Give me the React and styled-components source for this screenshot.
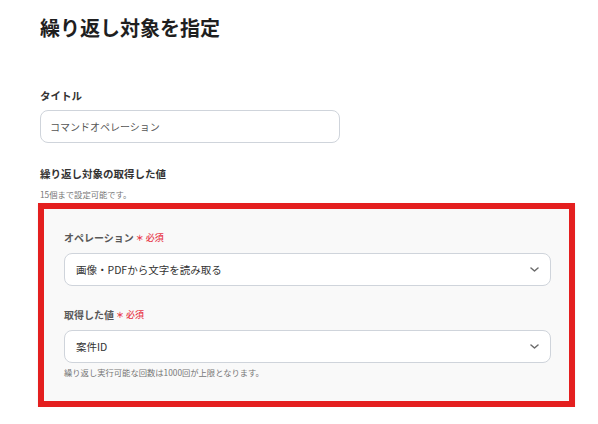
import React from "react";
import styled, { createGlobalStyle } from "styled-components";

const GlobalStyle = createGlobalStyle`
  body {
    margin: 0;
    background: #ffffff;
    font-family: "Noto Sans CJK JP", "Noto Sans", sans-serif;
    color: #222;
  }
`;

export default function App() {
  return (
    <>
      <GlobalStyle />
      <Page>
        <Title>繰り返し対象を指定</Title>

        <Label $top={46}>タイトル</Label>
        <TextInput>コマンドオペレーション</TextInput>

        <Label $top={23}>繰り返し対象の取得した値</Label>
        <Hint $top={6}>15個まで設定可能です。</Hint>

        <Highlight>
          <Panel>
            <FieldLabel>
              オペレーション
              <Star>＊</Star>
              <Required>必須</Required>
            </FieldLabel>
            <Select>
              <span>画像・PDFから文字を読み取る</span>
              <Chevron />
            </Select>

            <FieldLabel $top={21}>
              取得した値
              <Star>＊</Star>
              <Required>必須</Required>
            </FieldLabel>
            <Select>
              <span>案件ID</span>
              <Chevron />
            </Select>
            <Hint $top={3}>繰り返し実行可能な回数は1000回が上限となります。</Hint>
          </Panel>
        </Highlight>
      </Page>
    </>
  );
}

function Chevron() {
  return (
    <svg width="9" height="5" viewBox="0 0 9 5" fill="none">
      <path
        d="M1 1l3.5 3 3.5-3"
        stroke="#6b6b6b"
        strokeWidth="1.5"
        strokeLinecap="round"
        strokeLinejoin="round"
      />
    </svg>
  );
}

const Page = styled.div`
  width: 536px;
  padding: 14px 0 0 40px;
  display: flex;
  flex-direction: column;
`;

const Title = styled.h1`
  margin: 0;
  font-size: 20px;
  line-height: 28px;
  font-weight: 700;
  color: #1f1f1f;
`;

const Label = styled.div`
  margin-top: ${(p) => p.$top || 0}px;
  font-size: 10.5px;
  line-height: 16px;
  font-weight: 700;
  color: #333;
`;

const TextInput = styled.div`
  margin-top: 6px;
  box-sizing: border-box;
  width: 300px;
  height: 33px;
  padding: 0 9px;
  display: flex;
  align-items: center;
  border: 1px solid #cfd4db;
  border-radius: 8px;
  background: #fff;
  font-size: 10px;
  color: #555;
`;

const Hint = styled.div`
  margin-top: ${(p) => p.$top || 0}px;
  font-size: 8.3px;
  line-height: 12px;
  color: #777;
`;

const Highlight = styled.div`
  margin: 3px 1px 0 -2px;
  border: 6px solid #e41f1f;
  box-shadow: 0 1px 2px rgba(0, 0, 0, 0.08);
`;

const Panel = styled.div`
  background: #f9f9f9;
  padding: 21px 18px 23px 20px;
  display: flex;
  flex-direction: column;
`;

const FieldLabel = styled.div`
  margin-top: ${(p) => p.$top || 0}px;
  display: flex;
  align-items: center;
  font-size: 10px;
  line-height: 16px;
  font-weight: 600;
  color: #585858;
`;

const Star = styled.span`
  margin-left: 2px;
  font-size: 8px;
  color: #e8384b;
`;

const Required = styled.span`
  margin-left: 2px;
  font-size: 9px;
  font-weight: 500;
  color: #e8384b;
`;

const Select = styled.div`
  margin-top: 7px;
  box-sizing: border-box;
  height: 33px;
  padding: 0 11px 0 11px;
  display: flex;
  align-items: center;
  justify-content: space-between;
  border: 1px solid #cfd4db;
  border-radius: 8px;
  background: #fff;
  font-size: 10.5px;
  color: #333;
`;
